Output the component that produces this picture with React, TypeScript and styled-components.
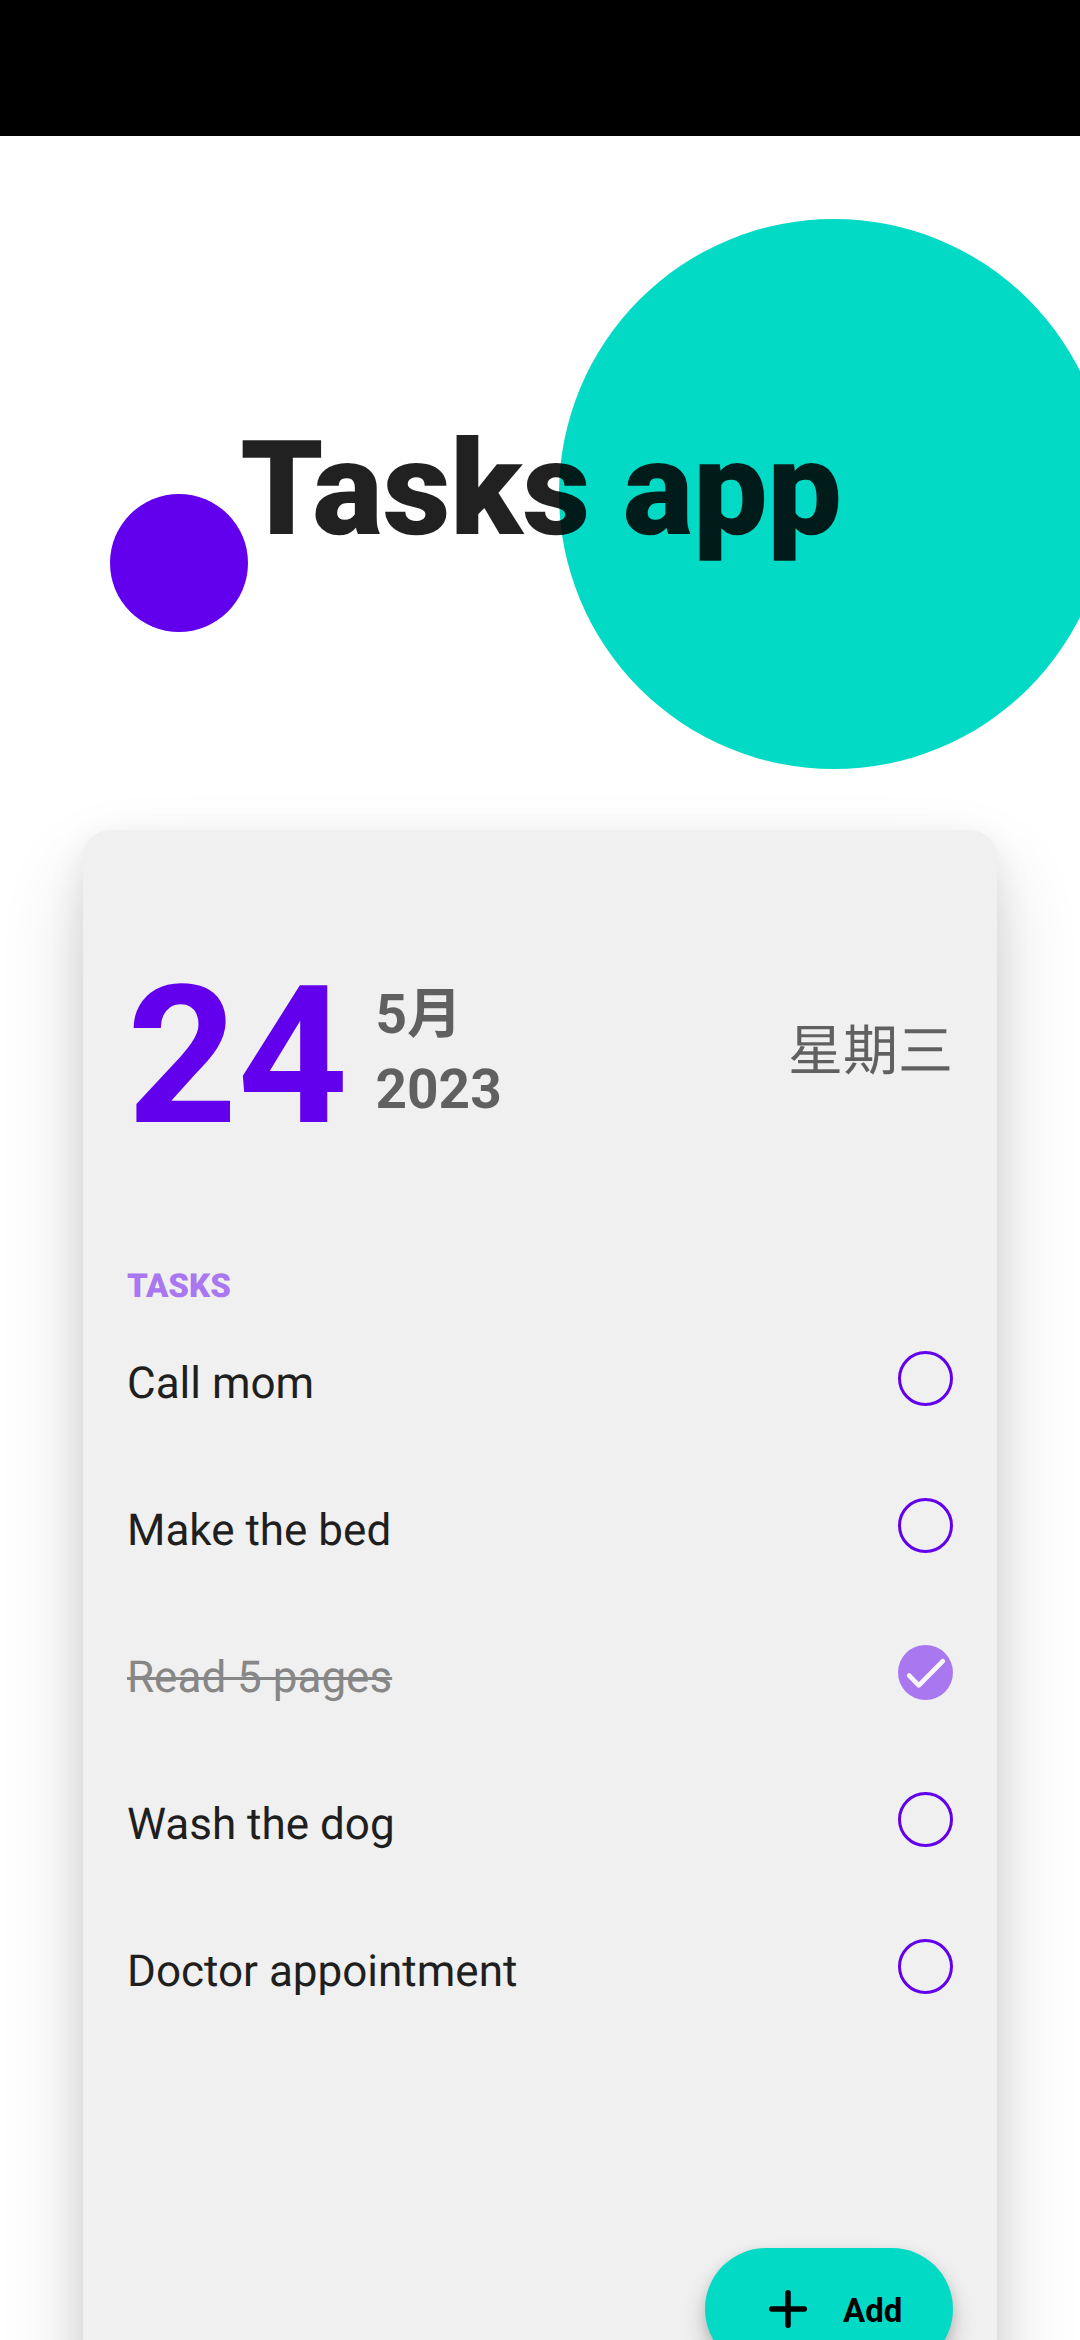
import React, { useState } from "react";
import styled, { createGlobalStyle } from "styled-components";

const GlobalStyle = createGlobalStyle`
  * { box-sizing: border-box; }
  html, body { margin: 0; padding: 0; background: #fff; }
  body {
    font-family: Roboto, "Noto Sans CJK SC", sans-serif;
    text-rendering: geometricPrecision;
  }
`;

const Screen = styled.div`
  width: 1080px;
  height: 2340px;
  overflow: hidden;
  display: flex;
  flex-direction: column;
  background: #fff;
`;

const StatusBar = styled.div`
  flex: none;
  height: 136px;
  background: #000;
`;

const Hero = styled.header`
  flex: none;
  position: relative;
  height: 694px;
  display: flex;
  justify-content: center;
  padding: 276px 0 0 2px;
`;

const Disc = styled.span<{ $size: number; $left: number; $top: number; $color: string }>`
  position: absolute;
  left: ${(p) => p.$left}px;
  top: ${(p) => p.$top}px;
  width: ${(p) => p.$size}px;
  height: ${(p) => p.$size}px;
  border-radius: 50%;
  background: ${(p) => p.$color};
`;

const Title = styled.h1`
  position: relative;
  margin: 0;
  font-size: 132px;
  line-height: 156px;
  font-weight: 900;
  color: rgba(0, 0, 0, 0.87);
  white-space: nowrap;
`;

const Card = styled.main`
  flex: none;
  width: 914px;
  height: 1620px;
  margin-left: 83px;
  padding: 126px 44px 0;
  border-radius: 27.5px;
  background: #f0f0f0;
  box-shadow: 0 44px 84px rgba(0, 0, 0, 0.16), 0 14px 36px rgba(0, 0, 0, 0.09);
  display: flex;
  flex-direction: column;
`;

const DateRow = styled.section`
  display: flex;
  height: 200px;
`;

const Day = styled.div`
  font-size: 192.5px;
  line-height: 200px;
  font-weight: 700;
  color: #6200ee;
`;

const MonthYear = styled.div`
  display: flex;
  flex-direction: column;
  padding-top: 22px;
  margin-left: 27.6px;
  font-size: 55px;
  line-height: 75px;
  font-weight: 700;
  color: rgba(0, 0, 0, 0.6);
`;

const Weekday = styled.div`
  margin-left: auto;
  padding-top: 56px;
  font-size: 55px;
  line-height: 80px;
  color: rgba(0, 0, 0, 0.6);
`;

const SectionLabel = styled.h2`
  margin: 111px 0 0;
  font-size: 33px;
  line-height: 40px;
  font-weight: 900;
  color: #a977ef;
`;

const List = styled.ul`
  list-style: none;
  margin: 44px 0 0;
  padding: 0;
  display: flex;
  flex-direction: column;
  gap: 92px;
`;

const Item = styled.li`
  display: flex;
  justify-content: space-between;
  align-items: center;
  height: 55px;
  cursor: pointer;
`;

const ItemText = styled.span<{ $done: boolean }>`
  padding-top: 9px;
  font-size: 44px;
  line-height: 52px;
  color: ${(p) => (p.$done ? "#878787" : "#1f1f1f")};
  text-decoration: ${(p) => (p.$done ? "line-through" : "none")};
  text-decoration-thickness: 3px;
`;

const Check = styled.svg`
  width: 55px;
  height: 55px;
  display: block;
`;

const AddButton = styled.button`
  margin: auto 0 80px auto;
  width: 248px;
  height: 122px;
  padding: 4px 0 0 64px;
  border: 0;
  border-radius: 61px;
  background: #03dac6;
  box-shadow: 0 14px 24px rgba(0, 0, 0, 0.2), 0 4px 12px rgba(0, 0, 0, 0.1);
  display: flex;
  align-items: center;
  gap: 36px;
  font: 700 33px/40px Roboto, sans-serif;
  color: #000;
`;

const Plus = styled.svg`
  flex: none;
  width: 38px;
  height: 38px;
  margin-top: -4px;
`;

const initialTasks = [
  { name: "Call mom", done: false },
  { name: "Make the bed", done: false },
  { name: "Read 5 pages", done: true },
  { name: "Wash the dog", done: false },
  { name: "Doctor appointment", done: false },
];

function CheckMark({ done }: { done: boolean }) {
  return (
    <Check viewBox="0 0 55 55">
      {done ? (
        <>
          <circle cx="27.5" cy="27.5" r="27.5" fill="#a977ef" />
          <path
            d="M11.2 30.6 20.8 40.3 44.8 16.2"
            fill="none"
            stroke="#f7f7f7"
            strokeWidth="4.7"
            strokeLinecap="round"
            strokeLinejoin="round"
          />
        </>
      ) : (
        <circle cx="27.5" cy="27.5" r="26" fill="none" stroke="#6200ee" strokeWidth="3" />
      )}
    </Check>
  );
}

export default function App() {
  const [tasks, setTasks] = useState(initialTasks);
  const toggle = (i: number) =>
    setTasks(tasks.map((t, n) => (n === i ? { ...t, done: !t.done } : t)));

  return (
    <>
      <GlobalStyle />
      <Screen>
        <StatusBar />
        <Hero>
          <Disc $size={550} $left={559} $top={83} $color="#03dac6" />
          <Disc $size={138} $left={110} $top={358} $color="#6200ee" />
          <Title>Tasks app</Title>
        </Hero>
        <Card>
          <DateRow>
            <Day>24</Day>
            <MonthYear>
              <span>5月</span>
              <span>2023</span>
            </MonthYear>
            <Weekday>星期三</Weekday>
          </DateRow>
          <SectionLabel>TASKS</SectionLabel>
          <List>
            {tasks.map((t, i) => (
              <Item key={t.name} onClick={() => toggle(i)}>
                <ItemText $done={t.done}>{t.name}</ItemText>
                <CheckMark done={t.done} />
              </Item>
            ))}
          </List>
          <AddButton>
            <Plus viewBox="0 0 38 38">
              <path d="M19 2.75v32.5M2.75 19h32.5" stroke="#000" strokeWidth="5.5" strokeLinecap="round" />
            </Plus>
            Add
          </AddButton>
        </Card>
      </Screen>
    </>
  );
}
